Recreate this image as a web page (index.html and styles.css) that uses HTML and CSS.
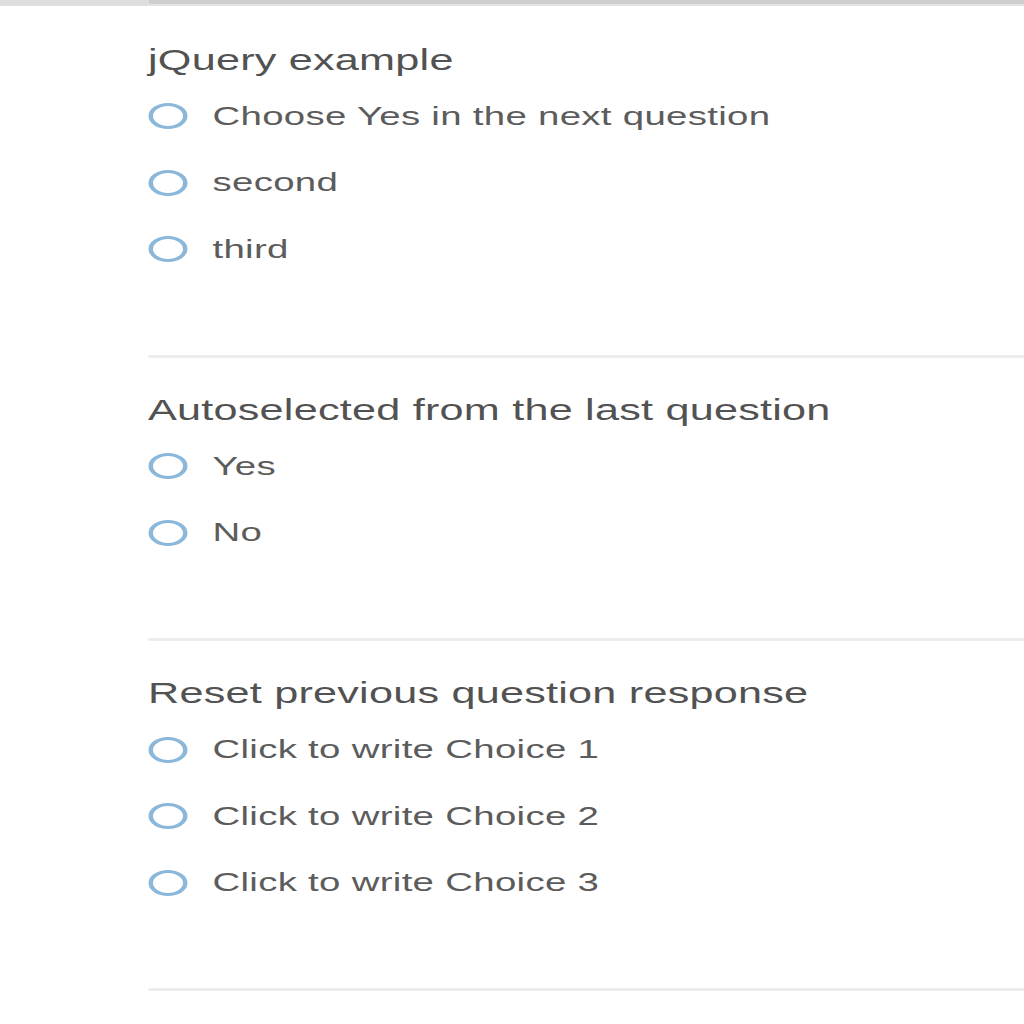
FILE: index.html
```html
<!DOCTYPE html>
<html lang="en">
<head>
<meta charset="utf-8">
<title>Survey</title>
<link rel="stylesheet" href="styles.css">
</head>
<body>
<div class="page">
  <div class="topbar">
    <div class="topbar-left"></div>
    <div class="topbar-line"></div>
  </div>
  <div class="content">
    <section class="question">
      <div class="q-text">jQuery example</div>
      <ul class="choices">
        <li class="choice"><span class="radio"></span><span class="label">Choose Yes in the next question</span></li>
        <li class="choice"><span class="radio"></span><span class="label">second</span></li>
        <li class="choice"><span class="radio"></span><span class="label">third</span></li>
      </ul>
    </section>
    <section class="question">
      <div class="q-text">Autoselected from the last question</div>
      <ul class="choices">
        <li class="choice"><span class="radio"></span><span class="label">Yes</span></li>
        <li class="choice"><span class="radio"></span><span class="label">No</span></li>
      </ul>
    </section>
    <section class="question">
      <div class="q-text">Reset previous question response</div>
      <ul class="choices">
        <li class="choice"><span class="radio"></span><span class="label">Click to write Choice 1</span></li>
        <li class="choice"><span class="radio"></span><span class="label">Click to write Choice 2</span></li>
        <li class="choice"><span class="radio"></span><span class="label">Click to write Choice 3</span></li>
      </ul>
    </section>
  </div>
</div>
</body>
</html>
```
FILE: styles.css
```css
html, body {
  margin: 0;
  padding: 0;
  background: #ffffff;
  overflow: hidden;
}

.page {
  width: 682.67px;
  transform: scaleX(1.5);
  transform-origin: 0 0;
  font-family: "Liberation Sans", Arial, sans-serif;
}

.topbar {
  display: flex;
  height: 6px;
}

.topbar-left {
  width: 98.67px;
  background: #dedede;
}

.topbar-line {
  flex: 1;
  border-top: 4px solid #cecece;
  background: #e4e4e4;
}

.content {
  padding-left: 98.67px;
  padding-top: 1.5px;
}

.question {
  padding-top: 34px;
  padding-bottom: 72px;
  border-bottom: 3px solid #ededed;
}

.q-text {
  font-size: 28.8px;
  line-height: 36px;
  letter-spacing: 0.15px;
  color: #525252;
}

.choices {
  list-style: none;
  margin: 5.5px 0 0 0;
  padding: 0;
}

.choice {
  display: flex;
  align-items: center;
  gap: 17px;
  height: 66.5px;
}

.radio {
  width: 26px;
  height: 26px;
  box-sizing: border-box;
  border: 3px solid #8ab7da;
  border-radius: 50%;
  flex: none;
}

.label {
  font-size: 25.6px;
  letter-spacing: 0.2px;
  color: #5c5c5c;
}
```
